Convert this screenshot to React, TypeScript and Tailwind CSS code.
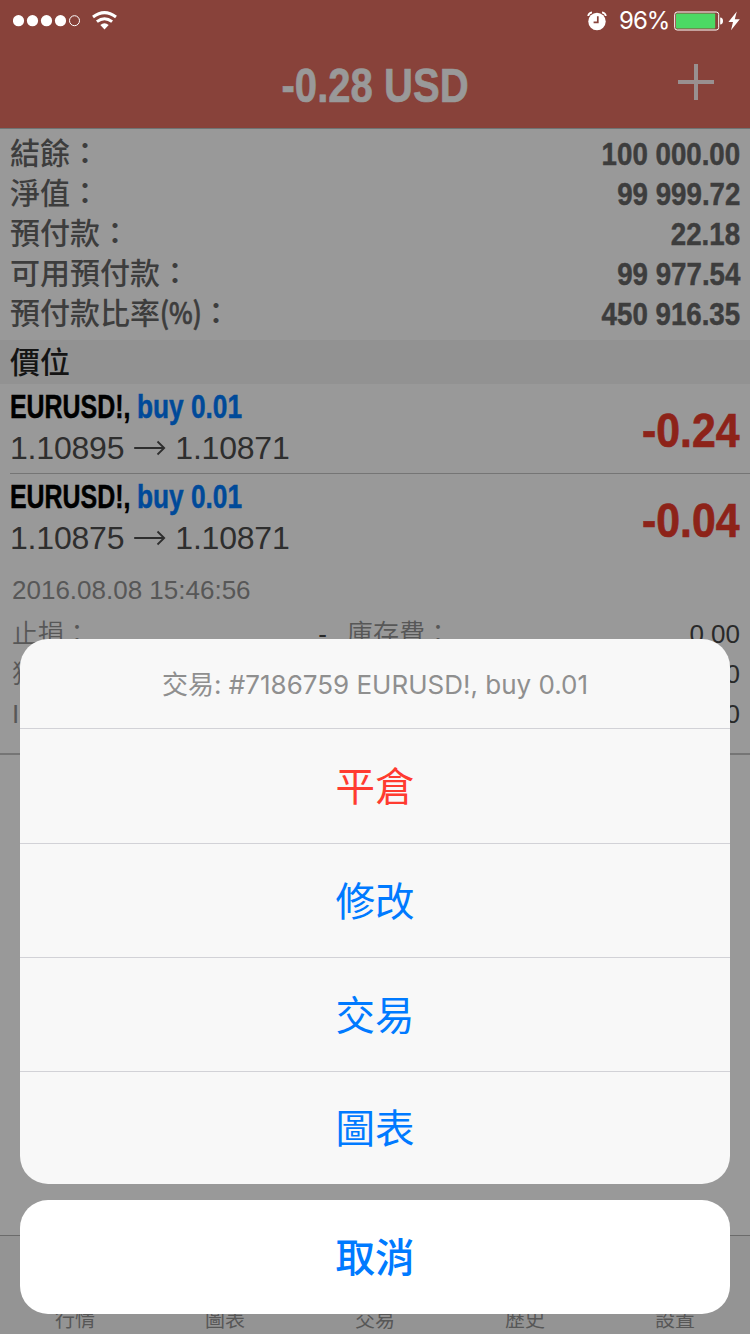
import React from 'react';

interface Trade {
  id: number;
  symbol: string;
  side: string;
  open: string;
  current: string;
  profit: string;
}

const SUMMARY = [
  { label: '結餘', unit: '', value: '100 000.00' },
  { label: '淨值', unit: '', value: '99 999.72' },
  { label: '預付款', unit: '', value: '22.18' },
  { label: '可用預付款', unit: '', value: '99 977.54' },
  { label: '預付款比率', unit: '(%)', value: '450 916.35' },
];

const TRADES: Trade[] = [
  { id: 1, symbol: 'EURUSD!,', side: 'buy 0.01', open: '1.10895', current: '1.10871', profit: '-0.24' },
  { id: 2, symbol: 'EURUSD!,', side: 'buy 0.01', open: '1.10875', current: '1.10871', profit: '-0.04' },
];

const DETAILS = [
  { label: '止損：', value: '-', feeLabel: '庫存費：', fee: '0.00' },
  { label: '獲利：', value: '', feeLabel: '', fee: '0.00' },
  { label: 'ID：', value: '', feeLabel: '', fee: '0.00' },
];

const TABS = ['行情', '圖表', '交易', '歷史', '設置'];

const ACTIONS = [
  { label: '平倉', destructive: true },
  { label: '修改', destructive: false },
  { label: '交易', destructive: false },
  { label: '圖表', destructive: false },
];

const StatusBar = () => (
  <div className="flex h-[41px] items-center justify-between text-white">
    <div className="flex items-center pl-[13px]">
      <svg width="68" height="12" viewBox="0 0 68 12" fill="currentColor">
        {[5.5, 19.5, 33.5, 47.5].map((cx) => (
          <circle key={cx} cx={cx} cy="5.7" r="5.6" />
        ))}
        <circle cx="61.5" cy="5.7" r="5" fill="none" stroke="currentColor" strokeWidth="1" />
      </svg>
      <svg className="ml-[11px]" width="25" height="19" viewBox="0 0 25 19">
        <path d="M1 6 Q12.5 -2.8 24 6" fill="none" stroke="currentColor" strokeWidth="3" />
        <path d="M4.9 10.6 Q12.5 4.8 20.1 10.6" fill="none" stroke="currentColor" strokeWidth="3" />
        <path d="M8.3 14 Q12.5 10.4 16.7 14 L12.5 18.4 Z" fill="currentColor" />
      </svg>
    </div>
    <div className="flex items-center pr-2.5">
      <svg width="20" height="20" viewBox="0 0 20 20">
        <circle cx="10" cy="10.5" r="8.7" fill="currentColor" />
        <path d="M1.2 5 Q1.6 2 5 1.4" fill="none" stroke="currentColor" strokeWidth="1.8" />
        <path d="M18.8 5 Q18.4 2 15 1.4" fill="none" stroke="currentColor" strokeWidth="1.8" />
        <path d="M10.8 5.2 V11.4 H6.6" fill="none" stroke="#88423a" strokeWidth="1.7" />
      </svg>
      <span className="ml-[12px] w-[49px] text-[24px] leading-[41px] tracking-[-1px] whitespace-nowrap">96%</span>
      <svg className="ml-[6px]" width="50" height="20" viewBox="0 0 50 20">
        <rect x="0.7" y="1" width="44" height="18" rx="2.5" fill="none" stroke="currentColor" strokeWidth="1" />
        <rect x="2" y="2.5" width="39.2" height="15" rx="0.8" fill="#4cd964" />
        <path d="M46.2 6.5 Q49 6.8 49 10 T46.2 13.5 Z" fill="currentColor" />
      </svg>
      <svg className="ml-[4px]" width="12" height="20" viewBox="0 0 12 20">
        <path d="M8.8 0.4 L0.4 11 H5 L3 19.2 L11.8 8.2 H6.8 Z" fill="currentColor" />
      </svg>
    </div>
  </div>
);

const TradeHeader: React.FC<{ trade: Trade }> = ({ trade }) => (
  <div className="flex h-[89px] items-center justify-between pr-[11px] pl-2.5">
    <div className="-mt-[3px]">
      <div className="flex h-[40px] items-center font-['Liberation_Sans',sans-serif] text-[33px] font-bold whitespace-nowrap text-black [-webkit-text-stroke:0.5px_currentColor]">
        <span className="w-[127px]">
          <span className="inline-block origin-left scale-x-[0.755]">{trade.symbol}</span>
        </span>
        <span className="inline-block origin-left scale-x-[0.795] text-[#004a99]">{trade.side}</span>
      </div>
      <div className="mt-px flex h-[40px] items-center font-['Liberation_Sans',sans-serif] text-[32px] tracking-[-0.2px] text-[#2e2e2e]">
        <span>{trade.open}</span>
        <svg className="mr-[9px] ml-[10px]" width="32" height="16" viewBox="0 0 32 16" fill="none" stroke="currentColor" strokeWidth="1.8">
          <path d="M0.2 8 H30.2 M23.5 1.5 L30.2 8 L23.5 14.5" />
        </svg>
        <span>{trade.current}</span>
      </div>
    </div>
    <span className="mt-1 inline-block origin-right scale-x-[0.89] font-['Liberation_Sans',sans-serif] text-[48px] font-bold text-[#8d2319] [-webkit-text-stroke:0.7px_currentColor]">
      {trade.profit}
    </span>
  </div>
);

const ActionSheet = () => (
  <div className="absolute inset-x-5 bottom-5 flex flex-col gap-4">
    <div className="overflow-hidden rounded-[28px] bg-[#f8f8f8] text-center">
      <div className="flex h-[89px] items-center justify-center pt-[2px] text-[26px] text-[#8f8f8f]">
        交易: #7186759 EURUSD!, buy 0.01
      </div>
      <div>
        {ACTIONS.map((action) => (
          <button
            key={action.label}
            className={`block h-[114px] w-full border-t border-[#d2d2d7] pt-1 text-[39.5px] first:h-[115px] last:h-[113px] ${
              action.destructive ? 'text-[#ff3b30]' : 'text-[#007aff]'
            }`}
          >
            {action.label}
          </button>
        ))}
      </div>
    </div>
    <button className="h-[114px] w-full rounded-[28px] bg-white pt-[3px] text-[39.5px] font-medium text-[#007aff]">
      取消
    </button>
  </div>
);

export default function App() {
  return (
    <div className="relative flex h-[1334px] w-[750px] flex-col overflow-hidden bg-[#999999] font-['Inter','Noto_Sans_CJK_TC',sans-serif]">
      <header className="h-[129px] border-b border-[#6f7474] bg-[#88423a]">
        <StatusBar />
        <div className="grid h-[87px] grid-cols-3 items-center">
          <span />
          <h1 className="mt-[3px] flex justify-center font-['Liberation_Sans',sans-serif] text-[48px] font-bold whitespace-nowrap text-[#999999] [-webkit-text-stroke:0.7px_currentColor]">
            <span className="inline-block scale-x-[0.835]">-0.28 USD</span>
          </h1>
          <svg className="mr-[35px] mb-[5px] justify-self-end" width="38" height="38" viewBox="0 0 38 38">
            <path d="M19 1 V37 M1 19 H37" stroke="#999090" strokeWidth="4" />
          </svg>
        </div>
      </header>

      <section className="h-[211px] px-2.5 pt-[5px] text-[#3d3d3d]">
        {SUMMARY.map((row) => (
          <div key={row.label} className="flex h-10 items-center justify-between">
            <span className="-mt-[7px] flex font-['Noto_Sans_CJK_TC',sans-serif] text-[30px] leading-10 font-medium">
              {row.label}
              {row.unit && (
                <span className="w-[41px]">
                  <span className="inline-block origin-left scale-x-[0.84] [-webkit-text-stroke:0.7px_currentColor]">{row.unit}</span>
                </span>
              )}
              ：
            </span>
            <span className="inline-block origin-right scale-x-[0.865] font-['Liberation_Sans',sans-serif] text-[32px] font-bold [-webkit-text-stroke:0.5px_currentColor]">
              {row.value}
            </span>
          </div>
        ))}
      </section>

      <h2 className="flex h-11 items-center bg-[#929292] pt-px pl-2.5 text-[30px] font-medium text-[#141414]">價位</h2>

      <section className="flex-1">
        <TradeHeader trade={TRADES[0]} />
        <div className="ml-2.5 h-px bg-[#757575]" />
        <TradeHeader trade={TRADES[1]} />
        <div className="h-[192px] border-b-2 border-[#757575] font-['Liberation_Sans','Noto_Sans_CJK_TC',sans-serif] text-[26px] leading-10 text-[#575757]">
          <div className="pt-[7px] pl-3">2016.08.08 15:46:56</div>
          <div className="mt-[4px] pr-2.5 pl-3">
            {DETAILS.map((row) => (
              <div key={row.label} className="grid h-10 grid-cols-[315px_1fr] gap-x-5">
                <div className="flex justify-between">
                  <span className="font-[350]">{row.label}</span>
                  <span className="text-[#292929]">{row.value}</span>
                </div>
                <div className="flex justify-between">
                  <span className="font-[350]">{row.feeLabel}</span>
                  <span className="text-[#292929]">{row.fee}</span>
                </div>
              </div>
            ))}
          </div>
        </div>
      </section>

      <nav className="grid h-[99px] grid-cols-5 items-end border-t border-[#6b6b6b] bg-[#949494] text-center text-[20px] leading-7 text-[#575757]">
        {TABS.map((tab) => (
          <span key={tab}>{tab}</span>
        ))}
      </nav>

      <ActionSheet />
    </div>
  );
}
